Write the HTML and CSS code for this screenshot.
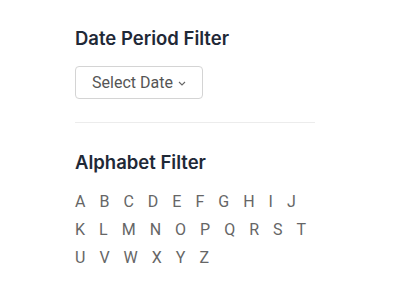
FILE: index.html
```html
<!DOCTYPE html>
<html>
<head>
<meta charset="utf-8">
<link rel="stylesheet" href="styles.css">
</head>
<body>
<div class="panel">
  <section class="filter">
    <h2 class="filter-title">Date Period Filter</h2>
    <button class="select-btn">Select Date <svg class="chev" width="8" height="5" viewBox="0 0 8 5"><path d="M1 1 L4 4 L7 1" fill="none" stroke="#666" stroke-width="1.1"/></svg></button>
  </section>
  <hr class="divider">
  <section class="filter">
    <h2 class="filter-title">Alphabet Filter</h2>
    <div class="letters">
      <span>A</span><span>B</span><span>C</span><span>D</span><span>E</span><span>F</span><span>G</span><span>H</span><span>I</span><span>J</span>
      <span>K</span><span>L</span><span>M</span><span>N</span><span>O</span><span>P</span><span>Q</span><span>R</span><span>S</span><span>T</span>
      <span>U</span><span>V</span><span>W</span><span>X</span><span>Y</span><span>Z</span>
    </div>
  </section>
</div>
</body>
</html>
```
FILE: styles.css
```css
html, body { margin: 0; padding: 0; background: #fff; }
.panel {
  width: 240px;
  padding: 26px 0 0 75px;
  font-family: Roboto, "Liberation Sans", sans-serif;
}
.filter-title {
  margin: 0;
  font-family: Inter, "Noto Sans", sans-serif;
  font-weight: 600;
  font-size: 18.5px;
  line-height: 24px;
  color: #1f2937;
}
.select-btn {
  margin-top: 16px;
  width: 128px;
  height: 33px;
  border: 1px solid #d4d4d4;
  border-radius: 4px;
  background: #fff;
  font-family: Roboto, "Liberation Sans", sans-serif;
  font-size: 16px;
  color: #555;
  display: flex;
  align-items: center;
  justify-content: center;
  gap: 5px;
  padding: 0;
}
.chev { margin-top: 1px; }
.divider {
  margin: 23px 0 27px;
  border: 0;
  border-top: 1px solid #ececec;
}
.letters {
  margin-top: 19px;
  display: flex;
  flex-wrap: wrap;
  column-gap: 14px;
  row-gap: 10px;
  font-size: 16px;
  line-height: 18px;
  color: #666;
}
```
